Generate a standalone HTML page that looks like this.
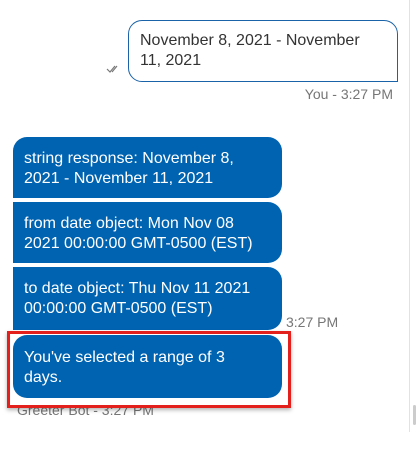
<!DOCTYPE html>
<html><head><style>
body{margin:0;width:416px;height:450px;background:#fff;font-family:"Liberation Sans",Arial,sans-serif;position:relative;overflow:hidden}
.a{position:absolute}
.b{position:absolute;left:13px;width:235px;background:#0063b1;color:#fff;font-size:16px;line-height:20px;padding:0 23px 0 11px;box-sizing:content-box}
.t{position:absolute;color:#767676;font-size:14px}
</style></head><body>
<div class="a" style="left:409px;top:0;width:1px;height:432px;background:#e2e2e2"></div>
<div class="a" style="left:413px;top:405px;width:3px;height:20px;background:#ccc;border-radius:2px"></div>
<div class="a" style="left:128px;top:20px;width:230px;height:40px;padding:10px 27px 10px 11px;border:1px solid #1a63a8;border-radius:14px 14px 0 14px;color:#333;font-size:16px;line-height:20px">November 8, 2021 - November 11, 2021</div>
<svg class="a" style="left:106px;top:63px" width="16" height="10"><path d="M1 6 l3 3 l5-6 M6 9 l5-6" stroke="#777" stroke-width="1.2" fill="none"/></svg>
<div class="t" style="right:23px;top:86px">You - 3:27 PM</div>
<div class="b" style="top:137px;height:61px;border-radius:14px 14px 14px 0"><div style="padding-top:12px">string response: November 8, 2021 - November 11, 2021</div></div>
<div class="b" style="top:202px;height:61px;border-radius:0 14px 14px 0"><div style="padding-top:12px">from date object: Mon Nov 08 2021 00:00:00 GMT-0500 (EST)</div></div>
<div class="b" style="top:267px;height:63px;border-radius:0 14px 14px 0"><div style="padding-top:12px">to date object: Thu Nov 11 2021 00:00:00 GMT-0500 (EST)</div></div>
<div class="t" style="left:286px;top:314px">3:27 PM</div>
<div class="t" style="left:17px;top:402px">Greeter Bot - 3:27 PM</div>
<div class="a" style="left:7px;top:331px;width:278px;height:71px;border:3px solid #e3201b;background:#fff;box-shadow:0 2px 4px rgba(0,0,0,.3)"></div>
<div class="b" style="top:335px;height:63px;border-radius:14px"><div style="padding-top:13px">You've selected a range of 3 days.</div></div>
</body></html>
